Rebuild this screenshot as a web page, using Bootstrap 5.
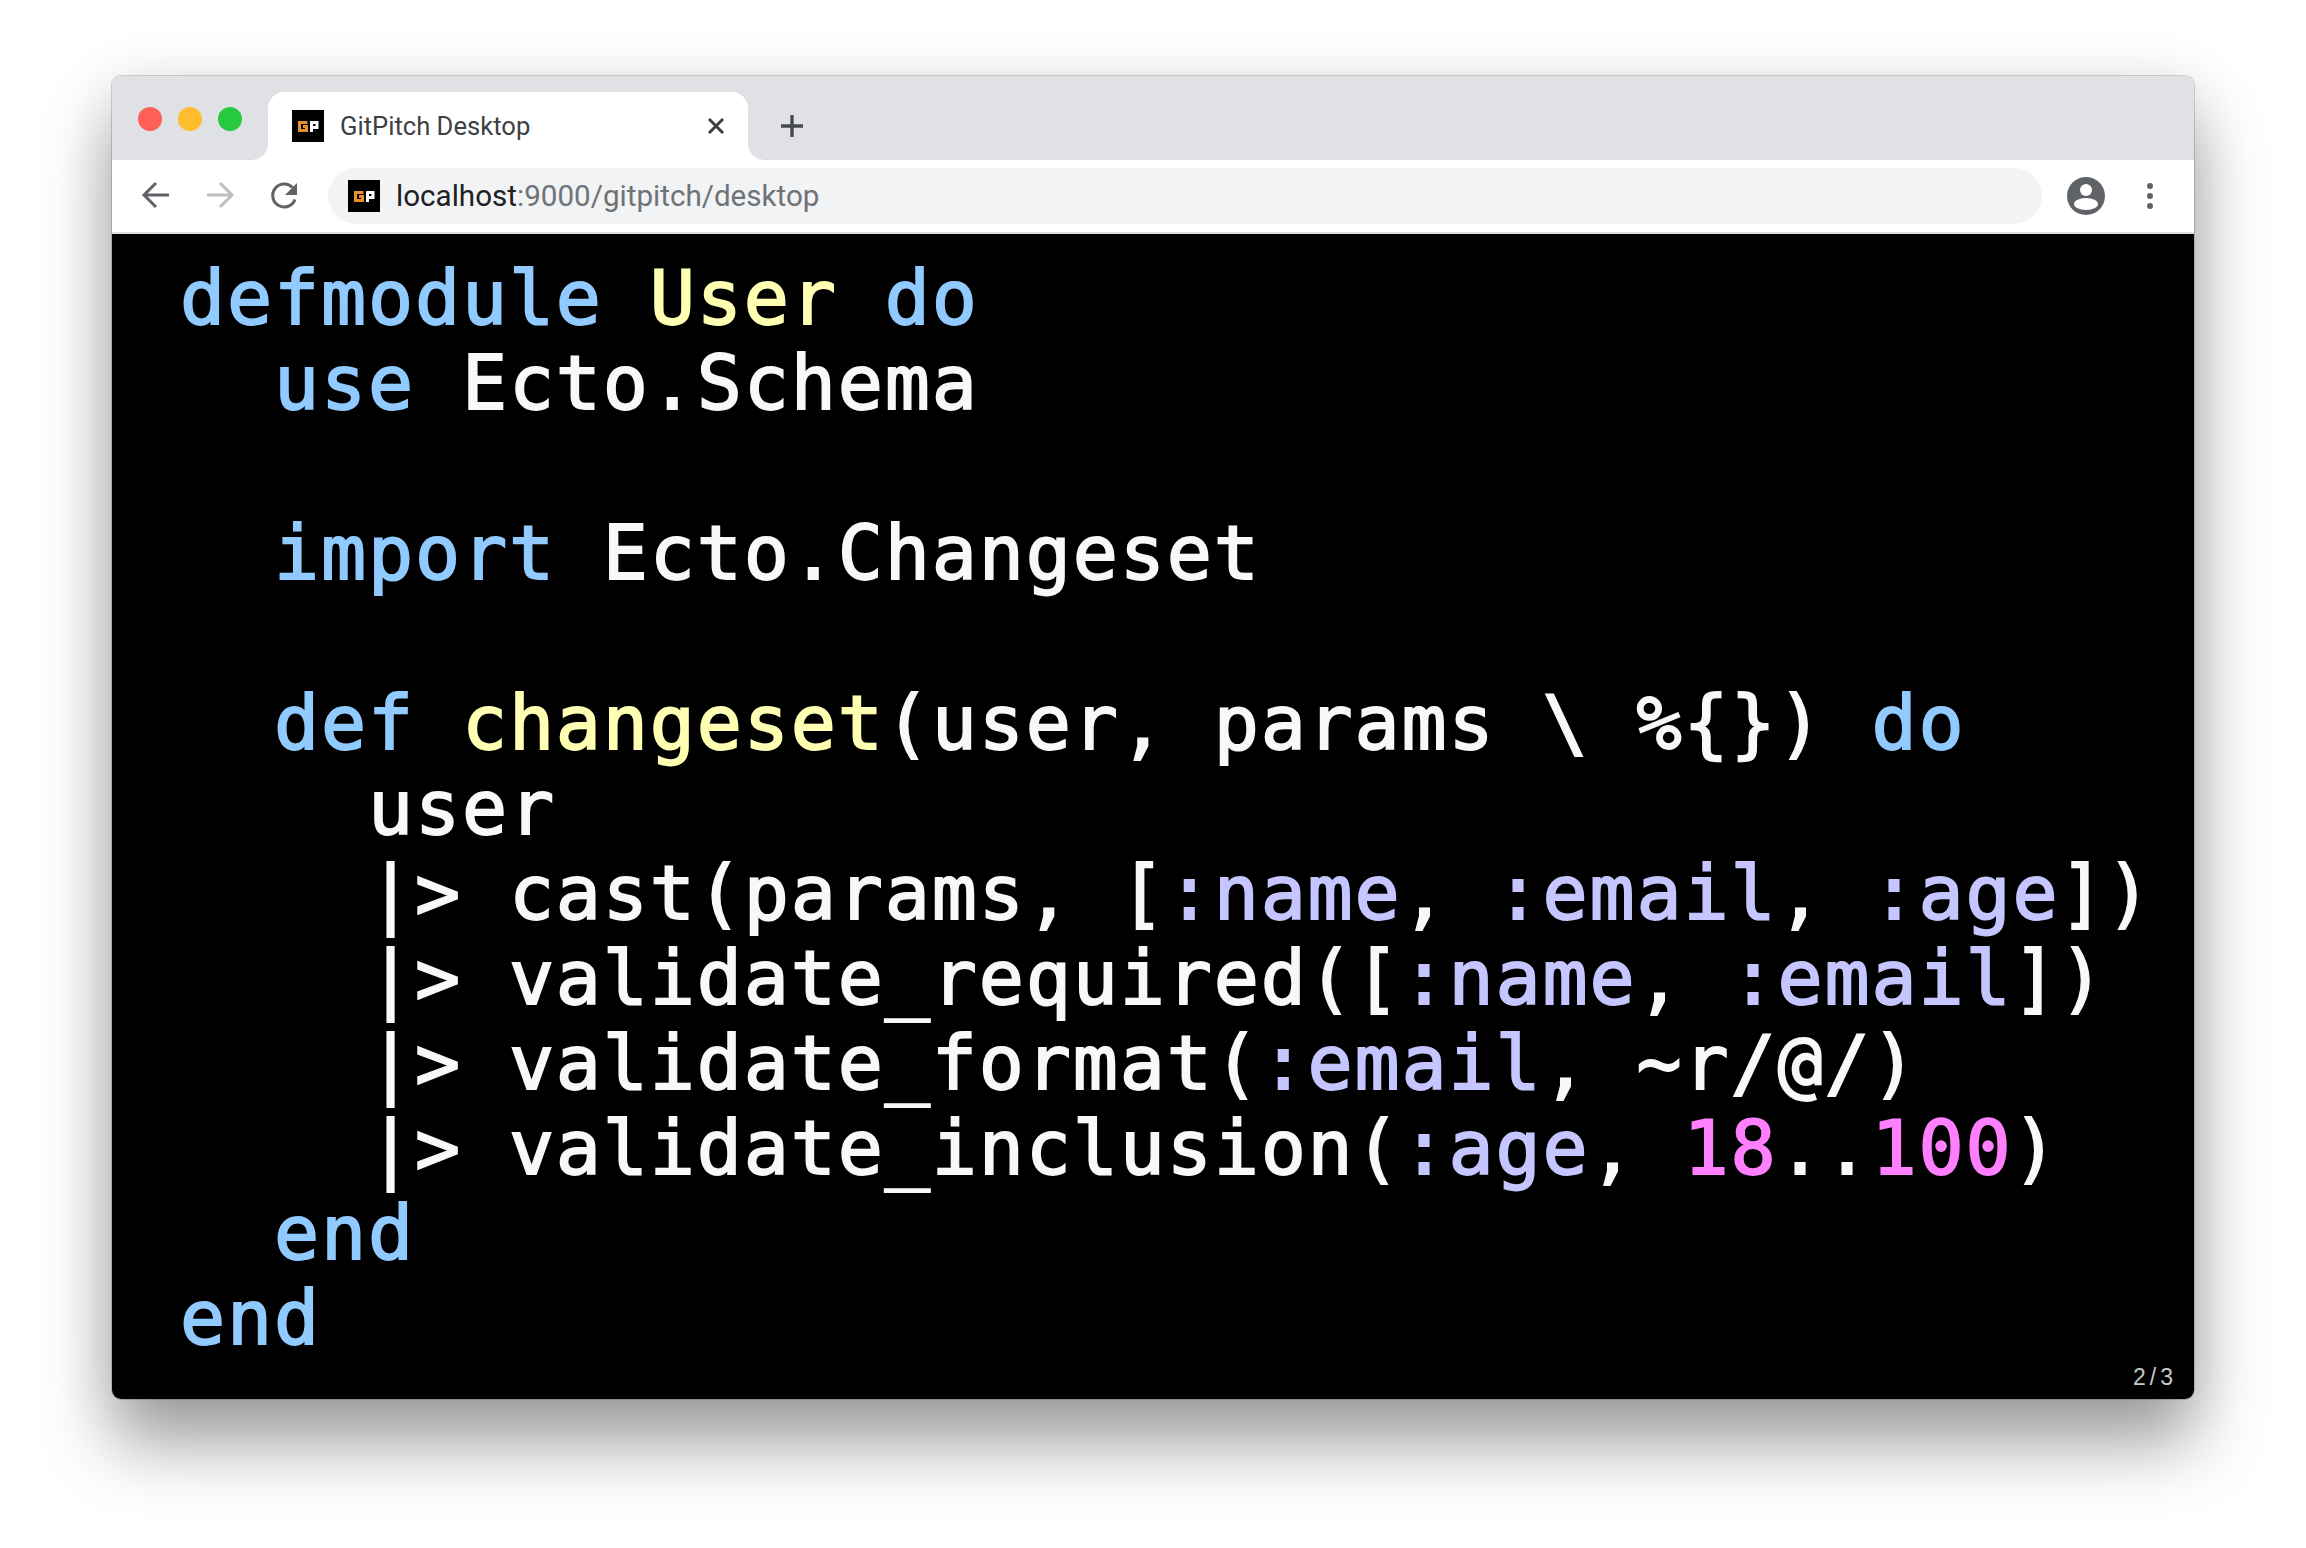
<!DOCTYPE html>
<html lang="en">
<head>
<meta charset="utf-8">
<title>GitPitch Desktop</title>
<link rel="stylesheet" href="https://cdn.jsdelivr.net/npm/bootstrap@5.3.0/dist/css/bootstrap.min.css">
<style>
html,body{height:100%;background:#fff;overflow:hidden}
.stage{width:2306px;height:1548px;padding:76px 112px 149px 112px}
.winframe{width:2082px;height:1323px;border-radius:9px;overflow:hidden;box-shadow:0 0 0 1px rgba(0,0,0,.16),0 44px 70px rgba(0,0,0,.38),0 0 60px rgba(0,0,0,.08)}
.tabstrip{height:84px;background:#dfe1e5;padding-top:16px}
.lights{width:156px;padding:15px 0 0 26px;gap:16px}
.lamp{width:24px;height:24px;border-radius:50%}
.lamp-r{background:#ff5f57}.lamp-y{background:#ffbd2e}.lamp-g{background:#27c93f}
.browser-tab{width:480px;height:68px;background:#fff;border-radius:16px 16px 0 0;padding:18px 0 0 24px;position:relative;font:25.6px "Roboto","Liberation Sans",sans-serif;color:#3c4043}
.browser-tab::before,.browser-tab::after{content:"";position:absolute;bottom:0;width:16px;height:16px}
.browser-tab::before{left:-16px;background:radial-gradient(circle at 0 0,#dfe1e5 15.5px,#fff 16px)}
.browser-tab::after{right:-16px;background:radial-gradient(circle at 100% 0,#dfe1e5 15.5px,#fff 16px)}
.favbox{width:32px;height:32px;flex:none}
.tabtitle{margin-left:16px;white-space:nowrap;line-height:32px}
.tabclose{margin:6px 22px 0 0;flex:none}
.tabplus{margin:22px 0 0 32px;flex:none}
.toolstrip{height:74px;background:#fff;border-bottom:2px solid #dee1e6;padding-left:20px}
.navico{width:48px;height:48px;flex:none;margin-right:16px}
.omnibox{width:1714px;height:56px;background:#f1f3f4;border-radius:28px;padding-left:20px;margin-left:4px;font:29.6px "Roboto","Liberation Sans",sans-serif;color:#6f7276;flex:none}
.omnibox b{font-weight:400;color:#202124}
.urltext{margin-left:16px;line-height:56px}
.avatarico{margin-left:25px;flex:none}
.dotsico{margin-left:42px;flex:none}
.codepane{height:1165px;background:#000;position:relative;padding:22px 0 0 68px}
.codeblock{margin:0;font:75px/85px "DejaVu Sans Mono",monospace;letter-spacing:1.83px;color:#f8f8f8;overflow:visible;-webkit-text-stroke:1.8px currentColor}
.kw{color:#90caff}.ty{color:#ffffb3}.at{color:#c5c5ff}.nu{color:#ff80ff}
.pager{position:absolute;right:17px;bottom:10px;font:23px/1 "Liberation Sans",sans-serif;letter-spacing:4px;color:#c8c8c8}
</style>
</head>
<body>
<div class="stage">
<div class="winframe d-flex flex-column">
  <div class="tabstrip d-flex">
    <div class="lights d-flex align-items-start">
      <span class="lamp lamp-r"></span>
      <span class="lamp lamp-y"></span>
      <span class="lamp lamp-g"></span>
    </div>
    <div class="browser-tab d-flex">
      <svg class="favbox" viewBox="0 0 32 32"><rect width="32" height="32" fill="#000"/><path d="M15.5 12.5H7.5V20.5H14.5V16.5H11" fill="none" stroke="#e8902c" stroke-width="3"/><path d="M19.5 22V12.5H25V17.5H19.5" fill="none" stroke="#fff" stroke-width="3"/></svg>
      <span class="tabtitle">GitPitch Desktop</span>
      <svg class="tabclose ms-auto" width="20" height="20" viewBox="0 0 20 20"><path d="M3 3l14 14M17 3L3 17" stroke="#3c4043" stroke-width="3"/></svg>
    </div>
    <svg class="tabplus" width="24" height="24" viewBox="0 0 24 24"><path d="M12 1v22M1 12h22" stroke="#45484c" stroke-width="3.4"/></svg>
  </div>
  <div class="toolstrip d-flex align-items-center">
    <svg class="navico" viewBox="0 0 48 48"><path d="M37 23H13M24 11L12 23l12 12" fill="none" stroke="#5f6368" stroke-width="3"/></svg>
    <svg class="navico" viewBox="0 0 48 48"><path d="M11 23h24M24 11l12 12-12 12" fill="none" stroke="#bcbec0" stroke-width="3"/></svg>
    <svg class="navico" viewBox="0 0 48 48"><path d="M35 27.5A11.5 11.5 0 1 1 32.5 15.5" fill="none" stroke="#5f6368" stroke-width="3"/><path d="M37 11v12H25z" fill="#5f6368"/></svg>
    <div class="omnibox d-flex align-items-center">
      <svg class="favbox" viewBox="0 0 32 32"><rect width="32" height="32" fill="#000"/><path d="M15.5 12.5H7.5V20.5H14.5V16.5H11" fill="none" stroke="#e8902c" stroke-width="3"/><path d="M19.5 22V12.5H25V17.5H19.5" fill="none" stroke="#fff" stroke-width="3"/></svg>
      <span class="urltext"><b>localhost</b>:9000/gitpitch/desktop</span>
    </div>
    <svg class="avatarico" width="38" height="38" viewBox="0 0 38 38"><circle cx="19" cy="19" r="19" fill="#5f6368"/><circle cx="19" cy="13" r="6" fill="#fff"/><ellipse cx="19" cy="27" rx="12" ry="6" fill="#fff"/></svg>
    <svg class="dotsico" width="6" height="26" viewBox="0 0 6 26"><circle cx="3" cy="3" r="3" fill="#5f6368"/><circle cx="3" cy="13" r="3" fill="#5f6368"/><circle cx="3" cy="23" r="3" fill="#5f6368"/></svg>
  </div>
  <div class="codepane flex-grow-1">
<pre class="codeblock"><span class="kw">defmodule</span> <span class="ty">User</span> <span class="kw">do</span>
  <span class="kw">use</span> Ecto.Schema

  <span class="kw">import</span> Ecto.Changeset

  <span class="kw">def</span> <span class="ty">changeset</span>(user, params \ %{}) <span class="kw">do</span>
    user
    |&gt; cast(params, [<span class="at">:name</span>, <span class="at">:email</span>, <span class="at">:age</span>])
    |&gt; validate_required([<span class="at">:name</span>, <span class="at">:email</span>])
    |&gt; validate_format(<span class="at">:email</span>, ~r/@/)
    |&gt; validate_inclusion(<span class="at">:age</span>, <span class="nu">18</span>..<span class="nu">100</span>)
  <span class="kw">end</span>
<span class="kw">end</span></pre>
    <div class="pager">2/3</div>
  </div>
</div>
</div>
<script src="https://cdn.jsdelivr.net/npm/bootstrap@5.3.0/dist/js/bootstrap.bundle.min.js"></script>
</body>
</html>
